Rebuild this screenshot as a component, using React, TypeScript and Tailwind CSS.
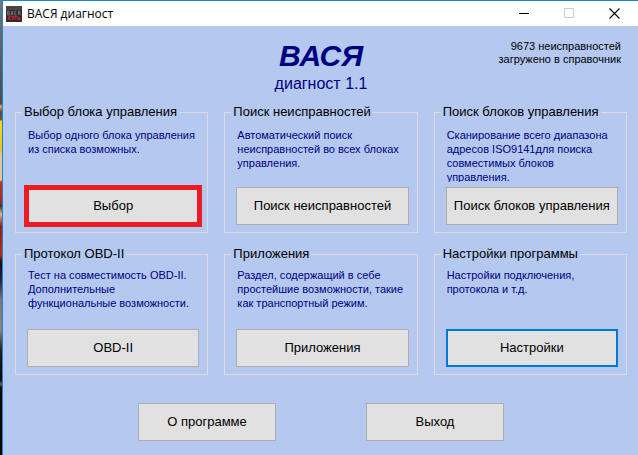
import type { ReactNode } from "react";

type Group = {
  title: string;
  text: string;
  button: string;
  marked?: boolean;
  focused?: boolean;
};

const topGroups: Group[] = [
  {
    title: "Выбор блока управления",
    text: "Выбор одного блока управления\nиз списка возможных.",
    button: "Выбор",
    marked: true,
  },
  {
    title: "Поиск неисправностей",
    text: "Автоматический поиск\nнеисправностей во всех блоках\nуправления.",
    button: "Поиск неисправностей",
  },
  {
    title: "Поиск блоков управления",
    text: "Сканирование всего диапазона\nадресов ISO9141для поиска\nсовместимых блоков\nуправления.",
    button: "Поиск блоков управления",
  },
];

const bottomGroups: Group[] = [
  {
    title: "Протокол OBD-II",
    text: "Тест на совместимость OBD-II.\nДополнительные\nфункциональные возможности.",
    button: "OBD-II",
  },
  {
    title: "Приложения",
    text: "Раздел, содержащий в себе\nпростейшие возможности, такие\nкак транспортный режим.",
    button: "Приложения",
  },
  {
    title: "Настройки программы",
    text: "Настройки подключения,\nпротокола и т.д.",
    button: "Настройки",
    focused: true,
  },
];

function PushButton({ children, className, focused }: { children: ReactNode; className: string; focused?: boolean }) {
  const border = focused ? "border-2 border-[#0078d7]" : "border border-[#adadad]";
  return (
    <button type="button" className={`h-[38px] bg-[#e1e1e1] text-[13px] whitespace-nowrap text-black ${border} ${className}`}>
      {children}
    </button>
  );
}

function GroupBox({ group, lower }: { group: Group; lower?: boolean }) {
  return (
    <fieldset className="min-w-0 border border-[#dcdcdc]">
      <legend className="ml-1.5 px-0.5 text-[13px] leading-4 whitespace-nowrap text-black">{group.title}</legend>
      <div className={`flex h-28 flex-col justify-between pb-[7px] ${lower ? "pt-1.5" : "pt-2"}`}>
        <p className="h-[54px] overflow-hidden pl-3 text-[11px] leading-[14px] whitespace-pre text-[#000080]">
          {group.text}
        </p>
        <div className="relative mr-2 ml-[11px] flex">
          <PushButton className="w-full" focused={group.focused}>
            {group.button}
          </PushButton>
          {group.marked && (
            <span className="pointer-events-none absolute -inset-x-[3px] -inset-y-0.5 border-[5px] border-[#ed1c24]" />
          )}
        </div>
      </div>
    </fieldset>
  );
}

function AppIcon() {
  return (
    <svg width="16" height="16" viewBox="0 0 16 16" aria-hidden="true">
      <rect width="16" height="16" fill="#2e2c2d" />
      <rect width="16" height="4" fill="#464445" />
      <path
        d="M1.5 5v4h1.5l.5-1-.5-1H2M3 7V5H1.5M5 9l1-4 1 4M5.300 8h1.400M10.500 5H9v4h1.500M12 9l1-2M14 9V5h-1.500v2H14"
        fill="none"
        stroke="#8c8889"
        strokeWidth="0.7"
      />
      <path
        d="M2 14l1.500-5M2.500 12l3-2M3 12l2 2M6 10l.5 2 1.500-2-1.500 4M8.500 14l1-4 2 .5-2 1.500M11.500 13l2.500-1-1-1-1.500 2 2 .5 1.500-1"
        fill="none"
        stroke="#d81f2c"
        strokeWidth="0.9"
      />
    </svg>
  );
}

function TitleBar() {
  return (
    <header className="flex h-[25px] items-center bg-white pl-[3px]">
      <AppIcon />
      <h1 className="ml-[5px] flex-1 font-['Open_Sans','Noto_Sans',sans-serif] text-xs text-black">ВАСЯ диагност</h1>
      <div className="flex">
        <button type="button" aria-label="Свернуть" className="flex w-[45px] justify-center">
          <svg width="10" height="10" viewBox="0 0 10 10" stroke="#000">
            <path d="M0 5.500h10" />
          </svg>
        </button>
        <button type="button" aria-label="Развернуть" disabled className="flex w-[45px] justify-center">
          <svg width="10" height="10" viewBox="0 0 10 10" fill="none" stroke="#ccc">
            <path d="M.5.5h9v9h-9z" />
          </svg>
        </button>
        <button type="button" aria-label="Закрыть" className="flex w-[47px] justify-center">
          <svg width="11" height="11" viewBox="0 0 11 11" stroke="#000" strokeWidth="1.1">
            <path d="M.5.5l10 10M10.500.5l-10 10" />
          </svg>
        </button>
      </div>
    </header>
  );
}

export default function App() {
  return (
    <div className="flex min-h-screen font-['Liberation_Sans',Arial,sans-serif]">
      <div className="w-0.5 bg-[linear-gradient(#75767a_0px,#55565c_75px,#4a4a50_104px,#d9b070_106px,#5a4a40_112px,#6b5a40_120px,#f2dc10_121px,#f0c020_150px,#e8c890_154px,#e0c8a0_180px,#c83018_182px,#b02a18_200px,#403030_206px,#d8b890_214px,#8a2018_226px,#c02818_255px,#101018_262px,#202040_280px,#77777c_300px,#8a857c_330px,#202024_350px,#050508_380px,#606068_384px,#050508_388px)]" />
      <div className="flex flex-1 flex-col border-t border-l border-[#1883d7] bg-[#b4c8f0]">
        <TitleBar />
        <main className="flex-1 pr-[11px] pl-3">
          <div className="grid h-[78px] grid-cols-3 gap-4">
            <div className="col-start-2 pt-3 text-center text-[#000080]">
              <p className="text-3xl leading-9 font-bold italic">ВАСЯ</p>
              <p className="text-base leading-5">диагност 1.1</p>
            </div>
            <p className="pt-3.5 pr-1.5 text-right text-[11px] leading-[13px] text-black">
              9673 неисправностей
              <br />
              загружено в справочник
            </p>
          </div>
          <div className="grid grid-cols-3 gap-x-4 gap-y-[13px]">
            {topGroups.map((group) => (
              <GroupBox key={group.title} group={group} />
            ))}
            {bottomGroups.map((group) => (
              <GroupBox key={group.title} group={group} lower />
            ))}
          </div>
          <div className="mt-7 flex justify-center gap-[90px]">
            <PushButton className="w-[138px]">О программе</PushButton>
            <PushButton className="w-[138px]">Выход</PushButton>
          </div>
        </main>
      </div>
    </div>
  );
}
